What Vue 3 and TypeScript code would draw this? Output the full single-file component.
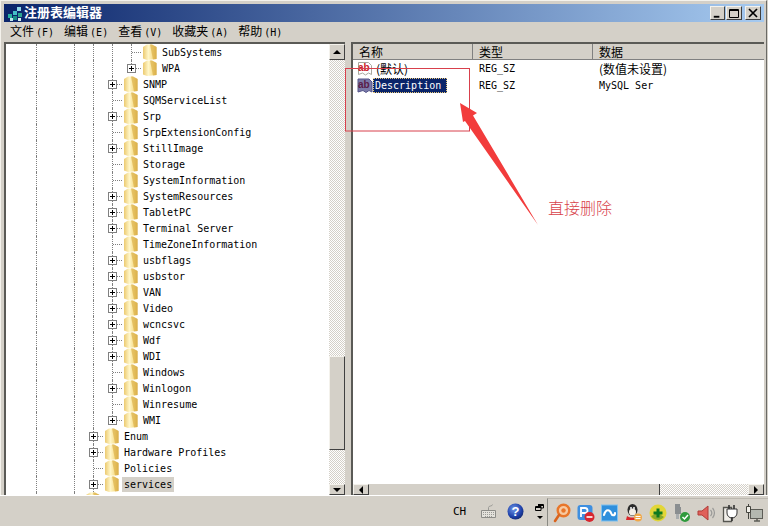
<script setup lang="ts">
interface TreeRow {
  label: string
  node: number // index of the cell holding the expander / connector
  plus?: boolean
  last?: boolean
  active?: boolean
}

const guideCells = [1, 3, 4, 5]
const cellsBefore = (node: number) => Array.from({ length: node }, (_, i) => i)

const rows: TreeRow[] = [
  { label: 'SubSystems', node: 6 },
  { label: 'WPA', node: 6, plus: true, last: true },
  { label: 'SNMP', node: 5, plus: true },
  { label: 'SQMServiceList', node: 5 },
  { label: 'Srp', node: 5, plus: true },
  { label: 'SrpExtensionConfig', node: 5 },
  { label: 'StillImage', node: 5, plus: true },
  { label: 'Storage', node: 5 },
  { label: 'SystemInformation', node: 5 },
  { label: 'SystemResources', node: 5, plus: true },
  { label: 'TabletPC', node: 5, plus: true },
  { label: 'Terminal Server', node: 5, plus: true },
  { label: 'TimeZoneInformation', node: 5 },
  { label: 'usbflags', node: 5, plus: true },
  { label: 'usbstor', node: 5, plus: true },
  { label: 'VAN', node: 5, plus: true },
  { label: 'Video', node: 5, plus: true },
  { label: 'wcncsvc', node: 5, plus: true },
  { label: 'Wdf', node: 5, plus: true },
  { label: 'WDI', node: 5, plus: true },
  { label: 'Windows', node: 5 },
  { label: 'Winlogon', node: 5, plus: true },
  { label: 'Winresume', node: 5 },
  { label: 'WMI', node: 5, plus: true, last: true },
  { label: 'Enum', node: 4, plus: true },
  { label: 'Hardware Profiles', node: 4, plus: true },
  { label: 'Policies', node: 4 },
  { label: 'services', node: 4, plus: true, active: true },
  { label: '', node: 3 }
]

const menus = [
  { name: '文件', key: '(F)' },
  { name: '编辑', key: '(E)' },
  { name: '查看', key: '(V)' },
  { name: '收藏夹', key: '(A)' },
  { name: '帮助', key: '(H)' }
]
</script>

<template>
  <div class="screen">
    <div class="frame">
      <div class="titlebar">
        <svg class="app-icon" width="16" height="16" viewBox="0 0 16 16">
          <rect x="1" y="9" width="4" height="4" fill="#27b0a0" />
          <rect x="3" y="13" width="3" height="3" fill="#bfe8ee" />
          <rect x="6" y="6" width="4" height="4" fill="#43c0c8" />
          <rect x="6" y="11" width="4" height="4" fill="#1a8f86" />
          <rect x="10" y="2" width="4" height="4" fill="#8fd8e8" />
          <rect x="11" y="8" width="4" height="4" fill="#2aa590" />
          <rect x="11" y="13" width="3" height="3" fill="#d9f2f2" />
        </svg>
        <span class="title">注册表编辑器</span>
        <div class="win-btns">
          <button class="win-btn min">
            <svg width="14" height="13" viewBox="0 0 14 13"><rect x="3" y="9" width="6" height="2" fill="#000" /></svg>
          </button>
          <button class="win-btn">
            <svg width="14" height="13" viewBox="0 0 14 13"><path d="M2.500 2.500h9v8h-9z M2 3.500h10" fill="none" stroke="#000" /></svg>
          </button>
          <button class="win-btn close">
            <svg width="14" height="13" viewBox="0 0 14 13"><path d="M3 2l8 8M11 2l-8 8" fill="none" stroke="#000" stroke-width="1.700" /></svg>
          </button>
        </div>
      </div>

      <div class="menubar">
        <span v-for="m in menus" :key="m.key" class="menu-item">{{ m.name }}<span class="menu-key">{{ m.key }}</span></span>
      </div>

      <div class="panes">
        <div class="tree-pane">
          <div class="tree">
            <div v-for="(row, i) in rows" :key="i" class="tree-row">
              <span
                v-for="c in cellsBefore(row.node)"
                :key="c"
                class="cell"
                :class="{ guide: guideCells.includes(c) }"
              ></span>
              <span class="cell node" :class="{ last: row.last }">
                <span v-if="row.plus" class="plus"></span>
              </span>
              <svg class="folder" width="19" height="16" viewBox="0 0 19 16">
                <defs>
                  <linearGradient :id="'fg' + i" x1="0" x2="1" y1="0" y2="0">
                    <stop offset="0" stop-color="#ecca70" />
                    <stop offset="0.4" stop-color="#fff6c8" />
                    <stop offset="0.75" stop-color="#f6dc88" />
                    <stop offset="1" stop-color="#d8ad48" />
                  </linearGradient>
                </defs>
                <path d="M2 3 L6 0.500 L11 0.500 L15.500 3 L15.500 15 L6 16 L2 14.500 Z" :fill="'url(#fg' + i + ')'" />
                <path d="M9 0.500 L11 0.500 L15.500 3 L15.500 15 L12 15.500 Z" fill="#dcb04a" opacity="0.7" />
              </svg>
              <span v-if="row.label" class="label" :class="{ active: row.active }">{{ row.label }}</span>
            </div>
          </div>
          <div class="vscroll">
            <div class="sb-btn tall"><i class="arrow up"></i></div>
            <div class="dither upper"></div>
            <div class="thumb"></div>
            <div class="dither lower"></div>
            <div class="sb-btn"><i class="arrow down"></i></div>
          </div>
        </div>

        <div class="splitter"></div>

        <div class="list-pane">
          <div class="list-head">
            <span class="col col-name">名称</span>
            <span class="col col-type">类型</span>
            <span class="col col-data">数据</span>
          </div>
          <div class="list-body">
            <div class="list-row">
              <span class="col-name name-cell">
                <svg class="val-icon" width="16" height="16" viewBox="0 0 16 16">
                  <path d="M1.500 1.500h10l3 3v9l-3-1.500-3 2-3-2-4 1.500z" fill="#fff" stroke="#a8a8a0" />
                  <text x="1" y="10" class="ab" fill="#c8202a">ab</text>
                </svg>
                <span class="val-name first">(默认)</span>
              </span>
              <span class="col-type cell-text">REG_SZ</span>
              <span class="col-data cell-text cjk">(数值未设置)</span>
            </div>
            <div class="list-row">
              <span class="col-name name-cell">
                <svg class="val-icon" width="16" height="16" viewBox="0 0 16 16">
                  <path d="M1 1h11l3 3v10l-3-1.500-3 2-3-2-5 1.500z" fill="#7a7aa8" stroke="#55558a" />
                  <text x="1" y="10" class="ab" fill="#5a1a48">ab</text>
                </svg>
                <span class="val-name selected">Description</span>
              </span>
              <span class="col-type cell-text">REG_SZ</span>
              <span class="col-data cell-text">MySQL Ser</span>
            </div>
          </div>
          <div class="hscroll">
            <div class="sb-btn wide"><i class="arrow left"></i></div>
            <div class="hthumb"></div>
            <div class="dither hrest"></div>
            <div class="sb-btn wide"><i class="arrow right"></i></div>
          </div>
        </div>
      </div>
    </div>

    <div class="taskbar">
      <span class="lang">CH</span>
      <svg class="kbd" width="17" height="14" viewBox="0 0 17 14">
        <path d="M1.500 6.500h14v7h-14z" fill="#e4e2dc" stroke="#8c8c88" />
        <path d="M3 8.500h11M3 10.500h11M5 12.500h7" stroke="#9a9a96" stroke-dasharray="1 1" />
        <path d="M8.500 6V3.500c0-2 4-1 4-3" fill="none" stroke="#9a9a96" />
      </svg>
      <svg class="help" width="17" height="17" viewBox="0 0 17 17">
        <defs>
          <radialGradient id="helpBlue" cx="0.4" cy="0.35" r="0.7">
            <stop offset="0" stop-color="#6f97e8" />
            <stop offset="0.7" stop-color="#1d3fa8" />
            <stop offset="1" stop-color="#14286c" />
          </radialGradient>
        </defs>
        <circle cx="8.500" cy="8.500" r="8" fill="url(#helpBlue)" />
        <text x="8.500" y="13" text-anchor="middle" class="q">?</text>
      </svg>
      <div class="restore">
        <svg width="9" height="7" viewBox="0 0 9 7">
          <path d="M3 .5h5.500v3.500H6 M.5 2.500H6v4H.5z M3 1.500h5.500 M.5 3.500H6" fill="none" stroke="#000" />
        </svg>
        <i class="arrow down small"></i>
      </div>

      <div class="tray">
        <!-- orange search -->
        <svg width="18" height="20" viewBox="0 0 18 20">
          <circle cx="10.500" cy="7.500" r="5.800" fill="#f7c9a0" stroke="#e8762a" stroke-width="2.400" />
          <circle cx="10.500" cy="7.500" r="2.200" fill="#e8762a" />
          <path d="M6 12 L2 18" stroke="#d9641e" stroke-width="2.600" stroke-linecap="round" />
        </svg>
        <!-- blue p with red badge -->
        <svg width="18" height="20" viewBox="0 0 18 20">
          <rect x="0.500" y="2" width="15" height="15" rx="3" fill="#3f8fe0" />
          <path d="M4 14V5h4a2.500 2.500 0 010 5H5" fill="none" stroke="#fff" stroke-width="1.800" />
          <circle cx="12.500" cy="14" r="5" fill="#d8262e" />
          <rect x="9.500" y="13.200" width="6" height="1.600" fill="#fff" />
        </svg>
        <!-- blue cloud -->
        <svg width="18" height="20" viewBox="0 0 18 20">
          <rect x="0.500" y="2" width="16" height="16" fill="#2f8fdc" stroke="#7fc0ee" />
          <path d="M3 12c2-7 6-5 7-2s4 3 4 0" fill="none" stroke="#fff" stroke-width="2.200" stroke-linecap="round" />
        </svg>
        <!-- penguin -->
        <svg width="18" height="20" viewBox="0 0 18 20">
          <ellipse cx="7.500" cy="7" rx="5" ry="6" fill="#2a2a2a" />
          <ellipse cx="7.500" cy="9" rx="3.500" ry="3.500" fill="#f4f0e8" />
          <circle cx="6" cy="5" r="1" fill="#fff" />
          <circle cx="9" cy="5" r="1" fill="#fff" />
          <path d="M2 13c3 2 8 2 11 0l1 4H1z" fill="#d8282c" />
          <circle cx="13" cy="14.500" r="4" fill="#f0a848" />
          <path d="M10.500 13.500h5M10.500 15.500h5" stroke="#fff" />
        </svg>
        <!-- green plus -->
        <svg width="18" height="20" viewBox="0 0 18 20">
          <circle cx="9" cy="10" r="8.500" fill="#e2d638" />
          <path d="M2 13a8 8 0 0013 1L9 10z" fill="#8aa82c" />
          <path d="M9 5.500v9M4.500 10h9" stroke="#0e7a20" stroke-width="3" />
        </svg>
        <!-- network plug -->
        <svg width="18" height="20" viewBox="0 0 18 20">
          <path d="M2 1h5v3h1v7H2V4h0z" fill="#8a8e90" />
          <path d="M3 11h3v5H3z" fill="#a8acae" />
          <circle cx="12" cy="14" r="5" fill="#2f9a3c" />
          <path d="M9.500 14l2 2 3.500-4" fill="none" stroke="#fff" stroke-width="1.500" />
        </svg>
        <!-- speaker -->
        <svg width="18" height="20" viewBox="0 0 18 20">
          <path d="M1 8h4l6-5v14l-6-5H1z" fill="#e0605a" stroke="#b03c38" />
          <path d="M13.500 7a4.500 4.500 0 010 6M15.500 5a7.500 7.500 0 010 10" fill="none" stroke="#9a9a98" stroke-width="1.200" />
        </svg>
        <!-- power -->
        <svg width="18" height="20" viewBox="0 0 18 20">
          <path d="M2.500 4.500h8v14h-8z" fill="#f0eee8" stroke="#55554f" stroke-width="1.300" />
          <path d="M8 2v4M13 2v4" stroke="#333" stroke-width="1.600" />
          <path d="M6 6h10v4a5 5 0 01-10 0z" fill="#fff" stroke="#333" />
          <path d="M11 14v4" stroke="#333" stroke-width="1.600" />
        </svg>
        <!-- network monitor -->
        <svg width="18" height="20" viewBox="0 0 18 20">
          <rect x="5.500" y="6.500" width="12" height="9" fill="#b4b8b0" stroke="#5c5c56" />
          <path d="M9 18h6M12 16v2" stroke="#5c5c56" stroke-width="1.500" />
          <path d="M1.500 3.500h4v6h-4z" fill="#f2f0ea" stroke="#44443e" />
          <path d="M3.500 1v3M3.500 9.500V16" stroke="#44443e" />
        </svg>
      </div>
    </div>

    <!-- annotation drawn over the screenshot -->
    <svg class="markup" width="768" height="526" viewBox="0 0 768 526">
      <rect x="345.500" y="68.500" width="124" height="62.500" fill="none" stroke="#d8404c" />
      <polygon points="460,103 477,113 473,115.500 538,225 465,121 463,122" fill="#f23c3c" />
    </svg>
    <span class="note">直接删除</span>
  </div>
</template>

<style>
html,
body {
  margin: 0;
  background: #d4d0c8;
}
</style>

<style scoped>
.screen {
  position: relative;
  width: 768px;
  height: 526px;
  overflow: hidden;
  background: #d4d0c8;
  display: flex;
  flex-direction: column;
  font-family: "DejaVu Sans Mono", "Liberation Mono", "Noto Sans CJK SC", monospace;
  font-size: 10px;
  color: #000;
}

.frame {
  height: 495px;
  box-sizing: border-box;
  width: 767px;
  padding: 3px 0 0 3px;
  border-top: 1px solid #f4f2ec;
  border-left: 1px solid #f4f2ec;
  border-right: 1px solid #6a6a66;
  display: flex;
  flex-direction: column;
}

.titlebar {
  height: 18px;
  flex: none;
  margin-right: 2px;
  display: flex;
  align-items: center;
  background: linear-gradient(90deg, #0a246a, #a6caf0);
}

.app-icon {
  margin-left: 3px;
}

.title {
  margin-left: 1px;
  padding-bottom: 2px;
  font-family: "Noto Sans CJK SC", sans-serif;
  font-size: 13px;
  line-height: 16px;
  font-weight: 700;
  color: #fff;
}

.win-btns {
  margin-left: auto;
  margin-right: 3px;
  display: flex;
  gap: 1px;
}

.win-btn {
  width: 16px;
  height: 14px;
  padding: 0;
  box-sizing: border-box;
  background: #d4d0c8;
  border: 1px solid;
  border-color: #f4f2ec #404040 #404040 #f4f2ec;
  display: flex;
  align-items: center;
  justify-content: center;
}

.win-btn.min {
  width: 15px;
}

.win-btn.close {
  margin-left: 2px;
}

.menubar {
  height: 20px;
  flex: none;
  box-sizing: border-box;
  padding: 0 0 3px 6px;
  display: flex;
  align-items: center;
  gap: 10px;
  font-family: "Noto Sans CJK SC", sans-serif;
  font-size: 12px;
}

.menu-key {
  margin-left: 2px;
  font-family: "DejaVu Sans Mono", monospace;
  font-size: 10px;
}

.panes {
  flex: 1;
  min-height: 0;
  display: flex;
}

.tree-pane {
  width: 341px;
  flex: none;
  box-sizing: border-box;
  border-top: 2px solid #5a5a56;
  border-left: 2px solid #5a5a56;
  display: flex;
  background: #fff;
}

.tree {
  flex: 1;
  min-width: 0;
  overflow: hidden;
  padding-left: 2px;
}

.tree-row {
  height: 16px;
  display: flex;
  align-items: center;
  white-space: nowrap;
}

.cell {
  position: relative;
  width: 19px;
  height: 16px;
  flex: none;
}

.cell.guide::before,
.cell.node::before {
  content: "";
  position: absolute;
  left: 9px;
  top: 0;
  bottom: 0;
  border-left: 1px dotted #808080;
}

.cell.node.last::before {
  bottom: 8px;
}

.cell.node::after {
  content: "";
  position: absolute;
  left: 10px;
  right: 0;
  top: 8px;
  border-top: 1px dotted #808080;
}

.plus {
  position: absolute;
  z-index: 1;
  left: 5px;
  top: 4px;
  width: 9px;
  height: 9px;
  box-sizing: border-box;
  border: 1px solid #808080;
  background:
    linear-gradient(#000, #000) center / 5px 1px no-repeat,
    linear-gradient(#000, #000) center / 1px 5px no-repeat,
    #fff;
}

.folder {
  flex: none;
}

.label {
  padding: 0 2px;
  height: 15px;
  line-height: 15px;
}

.label.active {
  background: #d4d0c8;
}

.vscroll {
  width: 16px;
  flex: none;
  display: flex;
  flex-direction: column;
}

.sb-btn {
  height: 11px;
  flex: none;
  box-sizing: border-box;
  background: #d4d0c8;
  border: 1px solid;
  border-color: #f4f2ec #404040 #404040 #f4f2ec;
  display: flex;
  align-items: center;
  justify-content: center;
}

.sb-btn.tall {
  height: 16px;
}

.sb-btn.wide {
  width: 16px;
  height: 11px;
}

.dither {
  background: repeating-conic-gradient(#d4d0c8 0 25%, #fff 0 50%) 0 0 / 2px 2px;
}

.dither.upper {
  height: 296px;
}

.dither.lower {
  flex: 1;
}

.thumb {
  height: 94px;
  flex: none;
  box-sizing: border-box;
  background: #d4d0c8;
  border: 1px solid;
  border-color: #f4f2ec #404040 #404040 #f4f2ec;
}

.arrow {
  display: block;
  width: 0;
  height: 0;
  border: 4px solid transparent;
}

.arrow.up {
  border-top: 0;
  border-bottom-color: #000;
}

.arrow.down {
  border-bottom: 0;
  border-top-color: #000;
}

.arrow.left {
  border-left: 0;
  border-right-color: #000;
}

.arrow.right {
  border-right: 0;
  border-left-color: #000;
}

.splitter {
  width: 6px;
  flex: none;
}

.list-pane {
  width: 413px;
  flex: none;
  box-sizing: border-box;
  border-top: 2px solid #5a5a56;
  border-left: 2px solid #5a5a56;
  background: #fff;
  display: flex;
  flex-direction: column;
}

.list-head {
  height: 15px;
  flex: none;
  display: flex;
  background: #d4d0c8;
  border-bottom: 1px solid #808080;
  font-family: "Noto Sans CJK SC", sans-serif;
  font-size: 12px;
  line-height: 15px;
}

.col {
  box-sizing: border-box;
  padding-left: 6px;
  border-right: 1px solid #808080;
}

.col-name {
  width: 120px;
  flex: none;
  box-sizing: border-box;
}

.col-type {
  width: 120px;
  flex: none;
  box-sizing: border-box;
}

.col-data {
  flex: 1;
}

.col.col-data {
  border-right: 0;
}

.list-body {
  flex: 1;
  min-height: 0;
}

.list-row {
  height: 17px;
  display: flex;
  align-items: center;
}

.name-cell {
  display: flex;
  align-items: center;
  padding-left: 4px;
}

.val-icon {
  flex: none;
}

.ab {
  font-family: "Liberation Sans", sans-serif;
  font-size: 10px;
  font-weight: 700;
}

.val-name {
  height: 15px;
  line-height: 15px;
}

.val-name.first {
  margin-left: 3px;
  font-family: "Noto Sans CJK SC", sans-serif;
  font-size: 12px;
}

.val-name.selected {
  padding: 0 6px 0 2px;
  background: #0a246a;
  color: #fff;
  outline: 1px dotted #e8c878;
  outline-offset: -1px;
}

.cell-text {
  padding-left: 6px;
}

.cell-text.cjk {
  font-family: "Noto Sans CJK SC", sans-serif;
  font-size: 12px;
}

.hscroll {
  height: 11px;
  flex: none;
  display: flex;
}

.hthumb {
  width: 290px;
  flex: none;
  background: #d4d0c8;
  border-right: 1px solid #404040;
}

.hrest {
  flex: 1;
}

.taskbar {
  flex: 1;
  border-top: 1px solid #fff;
  display: flex;
  align-items: center;
  padding-left: 453px;
}

.lang {
  width: 14px;
  margin-right: 13px;
  font-size: 11px;
}

.kbd {
  margin-right: 10px;
}

.help {
  margin-right: 11px;
}

.restore {
  width: 9px;
  margin-right: 3px;
  display: flex;
  flex-direction: column;
  align-items: center;
  gap: 5px;
}

.arrow.small {
  border-width: 3px 3px 0;
  border-top-color: #000;
  border-left-color: transparent;
  border-right-color: transparent;
}

.tray {
  align-self: stretch;
  margin-top: 2px;
  flex: 1;
  border-left: 1px solid #8a8a84;
  border-top: 1px solid #bcb8b0;
  display: flex;
  align-items: center;
  gap: 6px;
  padding-left: 5px;
}

.q {
  font-family: "Liberation Sans", sans-serif;
  font-size: 13px;
  font-weight: 700;
  fill: #fff;
}

.markup {
  position: absolute;
  left: 0;
  top: 0;
  pointer-events: none;
}

.note {
  position: absolute;
  left: 548px;
  top: 196px;
  font-family: "Noto Sans CJK SC", sans-serif;
  font-size: 16px;
  line-height: 22px;
  font-weight: 300;
  color: #d8424a;
}
</style>
